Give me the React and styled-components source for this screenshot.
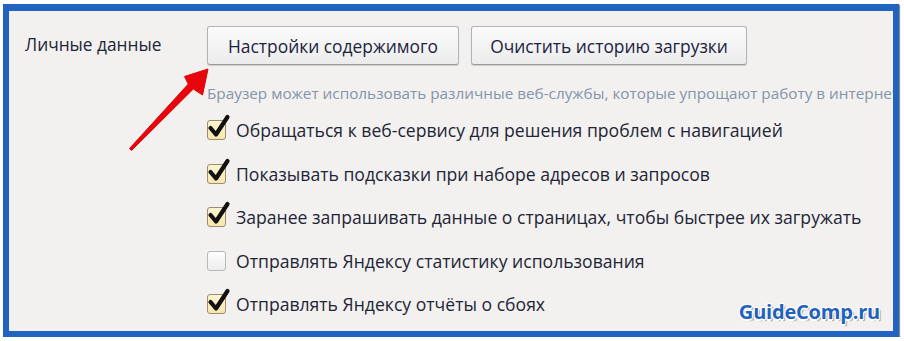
import React from "react";
import styled, { createGlobalStyle } from "styled-components";

const Global = createGlobalStyle`
  html, body { margin: 0; padding: 0; background: #ffffff; }
  body { font-family: "Open Sans", "Noto Sans", sans-serif; }
`;

const Frame = styled.div`
  position: relative;
  box-sizing: border-box;
  margin: 4px 0 0 3px;
  width: 896px;
  height: 333px;
  border: 6px solid #2263c1;
  border-top-width: 7px;
  background: #f2f1ef;
  box-shadow: 1px 1px 1px rgba(0, 0, 0, 0.45);
  overflow: hidden;
`;

const Layout = styled.div`
  display: grid;
  grid-template-columns: 182px 1fr;
  padding: 15px 0 0 16px;
`;

const Label = styled.div`
  font-size: 17.3px;
  color: #1e2536;
  padding-top: 7px;
  white-space: nowrap;
`;

const Content = styled.div`
  display: flex;
  flex-direction: column;
  min-width: 0;
`;

const Buttons = styled.div`
  display: flex;
  gap: 12px;
`;

const Button = styled.button`
  box-sizing: border-box;
  width: ${(p) => p.$w}px;
  height: 39px;
  border: 1px solid #b3b3b3;
  border-bottom-color: #9a9a9a;
  border-radius: 3px;
  background: linear-gradient(#fbfbfb, #ececec);
  box-shadow: 0 1px 1px rgba(0, 0, 0, 0.15);
  font-family: "Open Sans", "Noto Sans", sans-serif;
  font-size: 17.4px;
  color: #1c2340;
  padding: 0;
  white-space: nowrap;
  cursor: pointer;
`;

const Description = styled.div`
  margin-top: 18px;
  height: 20px;
  line-height: 20px;
  font-size: 15.3px;
  color: #8494aa;
  white-space: nowrap;
  overflow: hidden;
`;

const Options = styled.div`
  display: flex;
  flex-direction: column;
  gap: 19.5px;
  margin-top: 15px;
`;

const Row = styled.label`
  display: flex;
  align-items: center;
  gap: 10px;
  height: 24px;
  font-size: 17.6px;
  color: #1e2536;
  white-space: nowrap;
`;

const Box = styled.span`
  position: relative;
  box-sizing: border-box;
  flex: none;
  width: 19px;
  height: 20px;
  border: 1px solid ${(p) => (p.$checked ? "#a08b72" : "#b8b8b8")};
  border-radius: 3px;
  background: ${(p) =>
    p.$checked
      ? "linear-gradient(#fdf5d2, #f7e7ad)"
      : "linear-gradient(#ffffff, #ececec)"};
`;

const Check = styled.svg`
  position: absolute;
  left: 0px;
  top: -6px;
  width: 22px;
  height: 23px;
  overflow: visible;
`;

const Arrow = styled.svg`
  position: absolute;
  left: 0;
  top: 0;
  width: 884px;
  height: 320px;
  pointer-events: none;
`;

const Watermark = styled.div`
  position: absolute;
  right: 13px;
  bottom: 6px;
  font-family: "Open Sans", "DejaVu Sans", sans-serif;
  font-weight: 700;
  font-size: 20px;
  letter-spacing: -0.2px;
  color: #1f63bd;
  text-shadow: -1px -1px 0 #fff, 1px -1px 0 #fff, -1px 1px 0 #fff,
    1px 1px 0 #fff, 0 2px 0 #fff, 2px 2px 1px rgba(0, 0, 0, 0.35);
`;

const options = [
  { text: "Обращаться к веб-сервису для решения проблем с навигацией", checked: true },
  { text: "Показывать подсказки при наборе адресов и запросов", checked: true },
  { text: "Заранее запрашивать данные о страницах, чтобы быстрее их загружать", checked: true },
  { text: "Отправлять Яндексу статистику использования", checked: false },
  { text: "Отправлять Яндексу отчёты о сбоях", checked: true },
];

function Checkbox({ checked }) {
  return (
    <Box $checked={checked}>
      {checked && (
        <Check viewBox="0 0 22 23">
          <path
            d="M2.5 13 L8 19.5 L19.5 2"
            fill="none"
            stroke="#111"
            strokeWidth="4.2"
            strokeLinecap="round"
            strokeLinejoin="round"
          />
        </Check>
      )}
    </Box>
  );
}

export default function App() {
  return (
    <>
      <Global />
      <Frame>
        <Layout>
          <Label>Личные данные</Label>
          <Content>
            <Buttons>
              <Button $w={252}>Настройки содержимого</Button>
              <Button $w={276}>Очистить историю загрузки</Button>
            </Buttons>
            <Description>
              Браузер может использовать различные веб-службы, которые упрощают работу в интернете.
            </Description>
            <Options>
              {options.map((o) => (
                <Row key={o.text}>
                  <Checkbox checked={o.checked} />
                  {o.text}
                </Row>
              ))}
            </Options>
          </Content>
        </Layout>
        <Arrow viewBox="0 0 884 320">
          <path
            d="M120.5 137.5 L179.3 73 L175.5 65.5 L199 58 L193.5 84 L184.3 78 L122.5 139.5 Z"
            fill="#e8060c"
            stroke="#d9050b"
            strokeWidth="1"
            strokeLinejoin="round"
          />
        </Arrow>
        <Watermark>GuideComp.ru</Watermark>
      </Frame>
    </>
  );
}
